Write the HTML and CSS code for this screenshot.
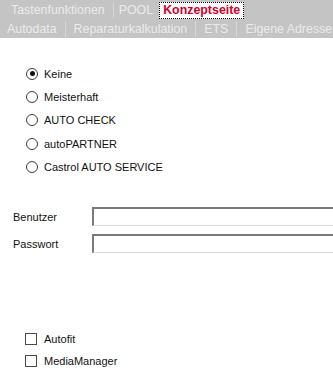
FILE: index.html
```html
<!DOCTYPE html>
<html lang="de">
<head>
<meta charset="utf-8">
<title>Konzeptseite</title>
<link rel="stylesheet" href="styles.css">
</head>
<body>
<div class="tabbar">
  <div class="tabrow row1">
    <span class="tab">Tastenfunktionen</span>
    <span class="tab sep">POOL</span>
    <span class="tab active">Konzeptseite</span>
  </div>
  <div class="tabrow row2">
    <span class="tab">Autodata</span>
    <span class="tab sep">Reparaturkalkulation</span>
    <span class="tab sep">ETS</span>
    <span class="tab sep">Eigene Adresse</span>
  </div>
</div>

<div class="options">
  <label class="opt"><input type="radio" name="konzept" checked><span>Keine</span></label>
  <label class="opt"><input type="radio" name="konzept"><span>Meisterhaft</span></label>
  <label class="opt"><input type="radio" name="konzept"><span>AUTO CHECK</span></label>
  <label class="opt"><input type="radio" name="konzept"><span>autoPARTNER</span></label>
  <label class="opt"><input type="radio" name="konzept"><span>Castrol AUTO SERVICE</span></label>
</div>

<div class="login">
  <div class="field"><span class="flabel">Benutzer</span><input type="text" class="finput"></div>
  <div class="field"><span class="flabel">Passwort</span><input type="password" class="finput"></div>
</div>

<div class="checks">
  <label class="opt chk"><input type="checkbox"><span>Autofit</span></label>
  <label class="opt chk"><input type="checkbox"><span>MediaManager</span></label>
</div>
</body>
</html>
```

FILE: styles.css
```css
html, body {
  margin: 0;
  padding: 0;
  background: #ffffff;
  overflow: hidden;
}
body {
  width: 333px;
  height: 389px;
  font-family: "Liberation Sans", Arial, sans-serif;
  font-size: 11px;
  color: #111;
}
.tabbar {
  background: #c4c4c4;
  height: 38px;
  display: flex;
  flex-direction: column;
}
.tabrow {
  display: flex;
  align-items: center;
  height: 19px;
  white-space: nowrap;
}
.row1 { padding-left: 6px; }
.tab {
  font-size: 12.4px;
  color: #ebebeb;
  padding: 0 8px;
  line-height: 16px;
}
.row1 .tab { padding: 0 8px 0 5px; }
.row1 .tab.sep { padding-right: 5px; }
.row2 .tab:first-child { padding-left: 7px; }
.tab.sep {
  border-left: 1px solid #d6d6d6;
}
.row1 .tab.active {
  background: #ffffff;
  border: 1px dotted #000;
  color: #d0002a;
  font-weight: bold;
  padding: 0 3px;
  margin-left: 1px;
  line-height: 15px;
  margin-top: 2px;
  margin-bottom: 1px;
}
.options {
  display: flex;
  flex-direction: column;
  padding-top: 24px;
}
.opt {
  display: flex;
  align-items: center;
  height: 23.3px;
  padding-left: 26px;
}
.opt input {
  appearance: none;
  -webkit-appearance: none;
  margin: 0 6px 0 0;
  width: 12px;
  height: 12px;
  border: 1px solid #3c3c3c;
  border-radius: 50%;
  background: #fff;
  box-sizing: border-box;
  position: relative;
  flex: none;
}
.opt input:checked::after {
  content: "";
  position: absolute;
  left: 2.5px;
  top: 2.5px;
  width: 5px;
  height: 5px;
  border-radius: 50%;
  background: #111;
}
.login {
  display: flex;
  flex-direction: column;
  gap: 8px;
  margin-top: 29px;
  overflow: hidden;
}
.field {
  display: flex;
  align-items: center;
  height: 19px;
}
.flabel {
  width: 79px;
  padding-left: 13px;
  flex: none;
}
.finput {
  flex: none;
  width: 250px;
  height: 19px;
  box-sizing: border-box;
  margin: 0;
  padding: 0 3px;
  border-top: 2px solid #7a7a7a;
  border-left: 2px solid #7a7a7a;
  border-bottom: 1px solid #dadada;
  border-right: 1px solid #dadada;
  background: #fff;
  font: inherit;
  outline: none;
}
.checks {
  display: flex;
  flex-direction: column;
  margin-top: 75px;
}
.chk {
  height: 22px;
  padding-left: 25px;
}
.chk input {
  border-radius: 0;
  border: 1px solid #4a4a4a;
  width: 12px;
  height: 12px;
  margin-right: 7px;
}
```
